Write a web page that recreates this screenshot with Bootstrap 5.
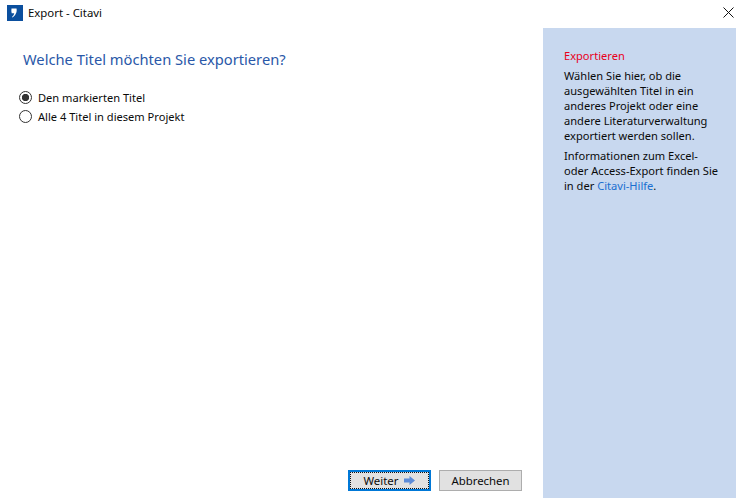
<!DOCTYPE html>
<html lang="de"><head><meta charset="utf-8"><title>Export - Citavi</title>
<link href="https://cdn.jsdelivr.net/npm/bootstrap@5.3.0/dist/css/bootstrap.min.css" rel="stylesheet">
<style>
html,body{height:498px;overflow:hidden}
body{font-family:"Noto Sans","Open Sans",sans-serif;font-size:11.1px;line-height:15px;color:#0a0a0a;background:#fff}
.win{height:498px}
.tbar{height:28px;padding:5px 0 0 7px}
.tlogo{width:16px;height:16px;background:#0b4f9e;flex:none}
.ttext{margin-left:5px;font-size:11.4px}
.xbtn{width:16px;height:15px;padding:0;border:0;background:none;margin-top:0}
.mainp{padding:0 21px 7px 19px;width:543px}
.heading{font-size:14.7px;line-height:22px;color:#2a58a8;margin:20px 0 0 4px;font-weight:400}
.opts{margin-top:20px;gap:4px}
.opt{height:15px;gap:6px}
.rad{appearance:none;width:13px;height:13px;border:1px solid #333;border-radius:50%;margin:0;background:#fff;flex:none}
.rad:checked{background:radial-gradient(circle,#333 0 3.4px,#fff 3.9px)}
.wbtn{width:83px;height:21px;padding:0;border-radius:0;font-size:11.4px;line-height:15px;color:#0a0a0a;background:#e1e1e1;border:1px solid #adadad}
.wbtn:hover{background:#e1e1e1}
.wprim{border:2px solid #0078d7;outline:1px dotted #111;outline-offset:-3px;gap:6px}
.side{width:193px;background:#c8d8ef;padding:20px 10px 0 21px}
.sred{color:#e8001c;margin:0 0 5px}
.side p{margin:0 0 5px}
.hlp{color:#1a6fd0;text-decoration:none}
</style></head><body>
<div class="win d-flex flex-column">
<div class="tbar d-flex align-items-start">
<span class="tlogo d-flex align-items-center justify-content-center"><svg width="16" height="16" viewBox="0 0 16 16"><path d="M4.500 3.500h5c.7 2.800-.3 6.500-4 9l-.5-.6c1.300-1.200 2-2.400 2.200-3.700H4.700C4.300 6.800 4.200 5 4.500 3.500z" fill="#fff"/></svg></span>
<span class="ttext">Export - Citavi</span>
<button class="xbtn ms-auto d-flex align-items-center justify-content-center" aria-label="Schließen"><svg width="11" height="11" viewBox="0 0 11 11"><path d="M.5.500l10 10M10.500.500l-10 10" stroke="#111" fill="none"/></svg></button>
</div>
<div class="d-flex flex-grow-1">
<div class="mainp d-flex flex-column">
<h1 class="heading">Welche Titel möchten Sie exportieren?</h1>
<div class="opts d-flex flex-column">
<label class="opt d-flex align-items-center"><input class="rad" type="radio" name="t" checked>Den markierten Titel</label>
<label class="opt d-flex align-items-center"><input class="rad" type="radio" name="t">Alle 4 Titel in diesem Projekt</label>
</div>
<div class="d-flex justify-content-end gap-2 mt-auto">
<button class="btn wbtn wprim d-flex align-items-center justify-content-center">Weiter <svg width="11" height="9" viewBox="0 0 11 9"><path d="M0 2.500h5.500V0L11 4.500 5.500 9V6.500H0z" fill="#5b8bd8"/></svg></button>
<button class="btn wbtn">Abbrechen</button>
</div>
</div>
<aside class="side">
<p class="sred">Exportieren</p>
<p>Wählen Sie hier, ob die ausgewählten Titel in ein anderes Projekt oder eine andere Literaturverwaltung exportiert werden sollen.</p>
<p>Informationen zum Excel-<br>oder Access-Export finden Sie in der <a class="hlp" href="#">Citavi-Hilfe</a>.</p>
</aside>
</div>
</div>
</body></html>
